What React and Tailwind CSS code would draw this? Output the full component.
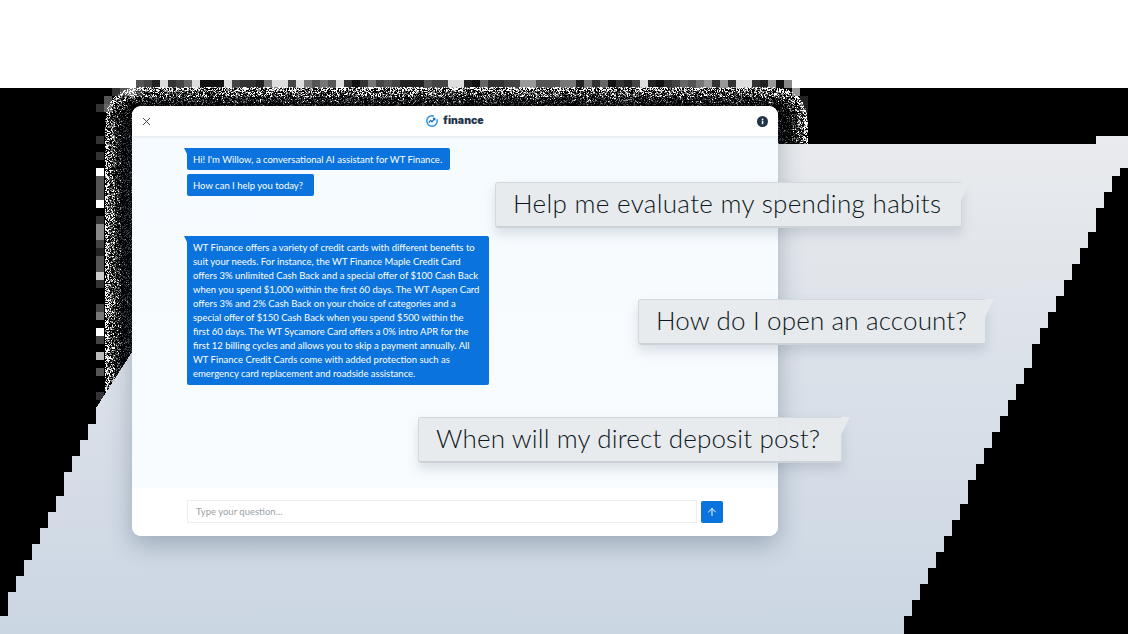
import React from "react";
import { ArrowUp, X } from "lucide-react";

function rng(seed) {
  let s = seed;
  return () => {
    s = (s * 1664525 + 1013904223) >>> 0;
    const t = (s ^ (s >>> 15)) >>> 0;
    return ((t * 2654435761) >>> 0) / 4294967296;
  };
}

function sdRound(x, y, x0, y0, x1, y1, r) {
  const cx = (x0 + x1) / 2, cy = (y0 + y1) / 2;
  const qx = Math.abs(x - cx) - ((x1 - x0) / 2 - r);
  const qy = Math.abs(y - cy) - ((y1 - y0) / 2 - r);
  return Math.min(Math.max(qx, qy), 0) + Math.hypot(Math.max(qx, 0), Math.max(qy, 0)) - r;
}

function buildNoise() {
  const r = rng(12345);
  let bright = "", mid = "", dim = "";
  for (let y = 86; y < 420; y++) {
    for (let x = 104; x < 808; x++) {
      if (x >= 132 && x < 778 && y >= 106) continue;
      const d = -sdRound(x, y, 105, 87, 807, 640, 32);
      if (d < 0) continue;
      const v = r();
      const px = `M${x} ${y}h1v1h-1z`;
      if (d < 4) {
        if (v < 0.4) bright += px;
        else if (v < 0.6) mid += px;
      } else if (d < 10) {
        if (v < 0.18) bright += px;
        else if (v < 0.4) mid += px;
        else if (v < 0.58) dim += px;
      } else if (d < 16) {
        if (v < 0.03) bright += px;
        else if (v < 0.16) mid += px;
        else if (v < 0.42) dim += px;
      } else {
        if (v < 0.015) mid += px;
        else if (v < 0.24) dim += px;
      }
    }
  }
  return { bright, mid, dim };
}

function buildShape() {
  const left = [];
  const right = [];
  for (let y = 408; y < 640; y += 8) {
    const x = Math.max(0, Math.round(((617 - y) * 0.468) / 8) * 8);
    left.push([x, y]);
  }
  for (let y = 168; y < 640; y += 8) {
    const x = Math.round((1032 - 0.47 * (y - 352)) / 8) * 8;
    right.push([x, y]);
  }
  let d = "M222 144H1096V136H1128V168";
  right.forEach(([x, y]) => {
    d += `H${x}V${y + 8}`;
  });
  d += "H0V624";
  [...left].reverse().forEach(([x, y]) => {
    d += `H${x}V${y}`;
  });
  d += "L132 352Z";
  return d;
}

const COL = [[136,"#333"],[152,"#333"],[168,"#fff"],[176,"#555"],[184,"#555"],[192,"#555"],[200,"#fff"],[216,"#333"],[224,"#888"],[232,"#888"],[240,"#444"],[248,"#222"],[256,"#555"],[264,"#555"],[272,"#ccc"],[280,"#333"],[304,"#444"],[312,"#777"],[328,"#fff"],[336,"#444"],[352,"#bbb"],[368,"#555"],[392,"#333"],[408,"#777"]];
const CORNER = [[104,96,"#555"],[96,104,"#333"],[104,104,"#666"],[112,88,"#333"],[120,88,"#555"],[128,88,"#777"],[136,88,"#333"],[792,88,"#999"],[784,80,"#888"],[800,96,"#222"],[800,104,"#222"],[800,112,"#111"],[800,120,"#111"]];

function Backdrop() {
  const { noise, blocks, shape } = React.useMemo(() => {
    const r = rng(777);
    const grays = ["#111","#222","#333","#333","#444","#444","#555","#666","#777","#999","#ddd"];
    const top = [];
    for (let x = 136; x < 784; x += 8) top.push([x, 80, grays[Math.floor(r() * grays.length)]]);
    return { noise: buildNoise(), blocks: [...top, ...CORNER, ...COL.map(([y, c]) => [96, y, c])], shape: buildShape() };
  }, []);
  return (
    <svg className="absolute left-0 top-0" width="1128" height="634" viewBox="0 0 1128 634" shapeRendering="crispEdges">
      <defs>
        <linearGradient id="para" x1="0" y1="136" x2="0" y2="634" gradientUnits="userSpaceOnUse">
          <stop offset="0" stopColor="#e9ebee" />
          <stop offset="1" stopColor="#cbd6e3" />
        </linearGradient>
      </defs>
      <rect x="0" y="88" width="1128" height="546" fill="#000" />
      {blocks.map(([x, y, c]) => (
        <rect key={x + "-" + y} x={x} y={y} width="8" height="8" fill={c} />
      ))}
      <path d={noise.dim} fill="#3a3a3a" />
      <path d={noise.mid} fill="#8a8a8a" />
      <path d={noise.bright} fill="#fff" />
      <path d={shape} fill="url(#para)" />
    </svg>
  );
}

function Bubble({ className = "", tail, children }) {
  return (
    <div className={"relative rounded-[2px] bg-[#0a73dd] text-[9.5px] leading-[14px] text-white whitespace-nowrap " + className}>
      {tail && <span className="absolute left-[-3px] top-0 h-[8px] w-[4px] bg-[#0a73dd] [clip-path:polygon(0_0,100%_0,100%_100%)]" />}
      {children}
    </div>
  );
}

function Chip({ className, children }) {
  return (
    <div className={"absolute h-[46px] rounded-[3px] rounded-tr-none border border-[#d3d8dc] border-b-[2px] border-b-[#cdd2d7] bg-[#e7eaed]/95 pl-[17px] text-[26px] font-light leading-[41px] text-[#0d1820] shadow-[0_6px_12px_rgba(70,90,110,0.18)] whitespace-nowrap " + className}>
      {children}
      <span className="absolute right-[-9px] top-[-1px] h-[18px] w-[9px] bg-[#e7eaed] [clip-path:polygon(0_0,100%_0,0_100%)]" />
    </div>
  );
}

const LINES = [
  "WT Finance offers a variety of credit cards with different benefits to",
  "suit your needs. For instance, the WT Finance Maple Credit Card",
  "offers 3% unlimited Cash Back and a special offer of $100 Cash Back",
  "when you spend $1,000 within the first 60 days. The WT Aspen Card",
  "offers 3% and 2% Cash Back on your choice of categories and a",
  "special offer of $150 Cash Back when you spend $500 within the",
  "first 60 days. The WT Sycamore Card offers a 0% intro APR for the",
  "first 12 billing cycles and allows you to skip a payment annually. All",
  "WT Finance Credit Cards come with added protection such as",
  "emergency card replacement and roadside assistance.",
];

export default function App() {
  return (
    <div className="relative h-[634px] w-[1128px] overflow-hidden bg-white pl-[132px] pt-[106px] font-['Lato',sans-serif]">
      <Backdrop />
      <div className="relative flex h-[430px] w-[646px] flex-col overflow-hidden rounded-[9px] bg-white shadow-[0_8px_26px_rgba(40,60,85,0.32)]">
        <header className="relative flex h-[30px] flex-none items-center justify-between bg-white pl-[8px] pr-[10px] shadow-[0_1px_3px_rgba(60,80,100,0.12)]">
          <X size={13} strokeWidth={1.6} className="text-[#1f2a36]" />
          <div className="flex items-center gap-[5px] font-['Inter',sans-serif] text-[10.5px] font-black leading-none text-[#1f3349]">
            <svg width="12" height="12" viewBox="0 0 12 12" fill="none">
              <circle cx="6" cy="6" r="5.2" stroke="#1f8fe6" strokeWidth="1.4" strokeDasharray="26 4" />
              <path d="M2.8 7.6 4.6 5.4 6 6.8 8.6 3.6M7 3.4h1.8v1.8" stroke="#0f6fd0" strokeWidth="1.3" />
            </svg>
            <span>finance</span>
          </div>
          <svg width="11" height="11" viewBox="0 0 11 11">
            <circle cx="5.5" cy="5.5" r="5.5" fill="#1f3349" />
            <rect x="4.8" y="4.6" width="1.5" height="3.6" fill="#fff" />
            <rect x="4.8" y="2.6" width="1.5" height="1.4" fill="#fff" />
          </svg>
        </header>
        <main className="flex flex-1 flex-col items-start bg-gradient-to-b from-[#f6fbff] to-[#f8fcff] pl-[55px] pt-[12px]">
          <Bubble tail className="w-[263px] pb-[3px] pl-[6px] pt-[5px]">Hi! I'm Willow, a conversational AI assistant for WT Finance.</Bubble>
          <Bubble className="mt-[4px] w-[127px] pb-[3px] pl-[6px] pt-[5px]">How can I help you today?</Bubble>
          <Bubble tail className="mt-[40px] w-[302px] pb-[4px] pl-[6px] pt-[5px]">
            {LINES.map((l) => (
              <div key={l}>{l}</div>
            ))}
          </Bubble>
        </main>
        <footer className="flex h-[48px] flex-none items-start gap-[4px] bg-white pl-[55px] pt-[12px]">
          <div className="flex h-[23px] w-[510px] items-center border border-[#eceef0] bg-white pl-[8px] pt-[2px] text-[9.5px] text-[#9aa1a8]">Type your question...</div>
          <div className="mt-[1px] flex h-[22px] w-[22px] items-center justify-center rounded-[2px] bg-[#0a73dd]">
            <ArrowUp size={12} strokeWidth={2} className="text-white" />
          </div>
        </footer>
      </div>
      <Chip className="left-[495px] top-[182px] w-[467px] tracking-[0.32px]">Help me evaluate my spending habits</Chip>
      <Chip className="left-[638px] top-[299px] w-[348px] tracking-[0.15px]">How do I open an account?</Chip>
      <Chip className="left-[418px] top-[417px] w-[424px] tracking-[0.15px]">When will my direct deposit post?</Chip>
    </div>
  );
}
